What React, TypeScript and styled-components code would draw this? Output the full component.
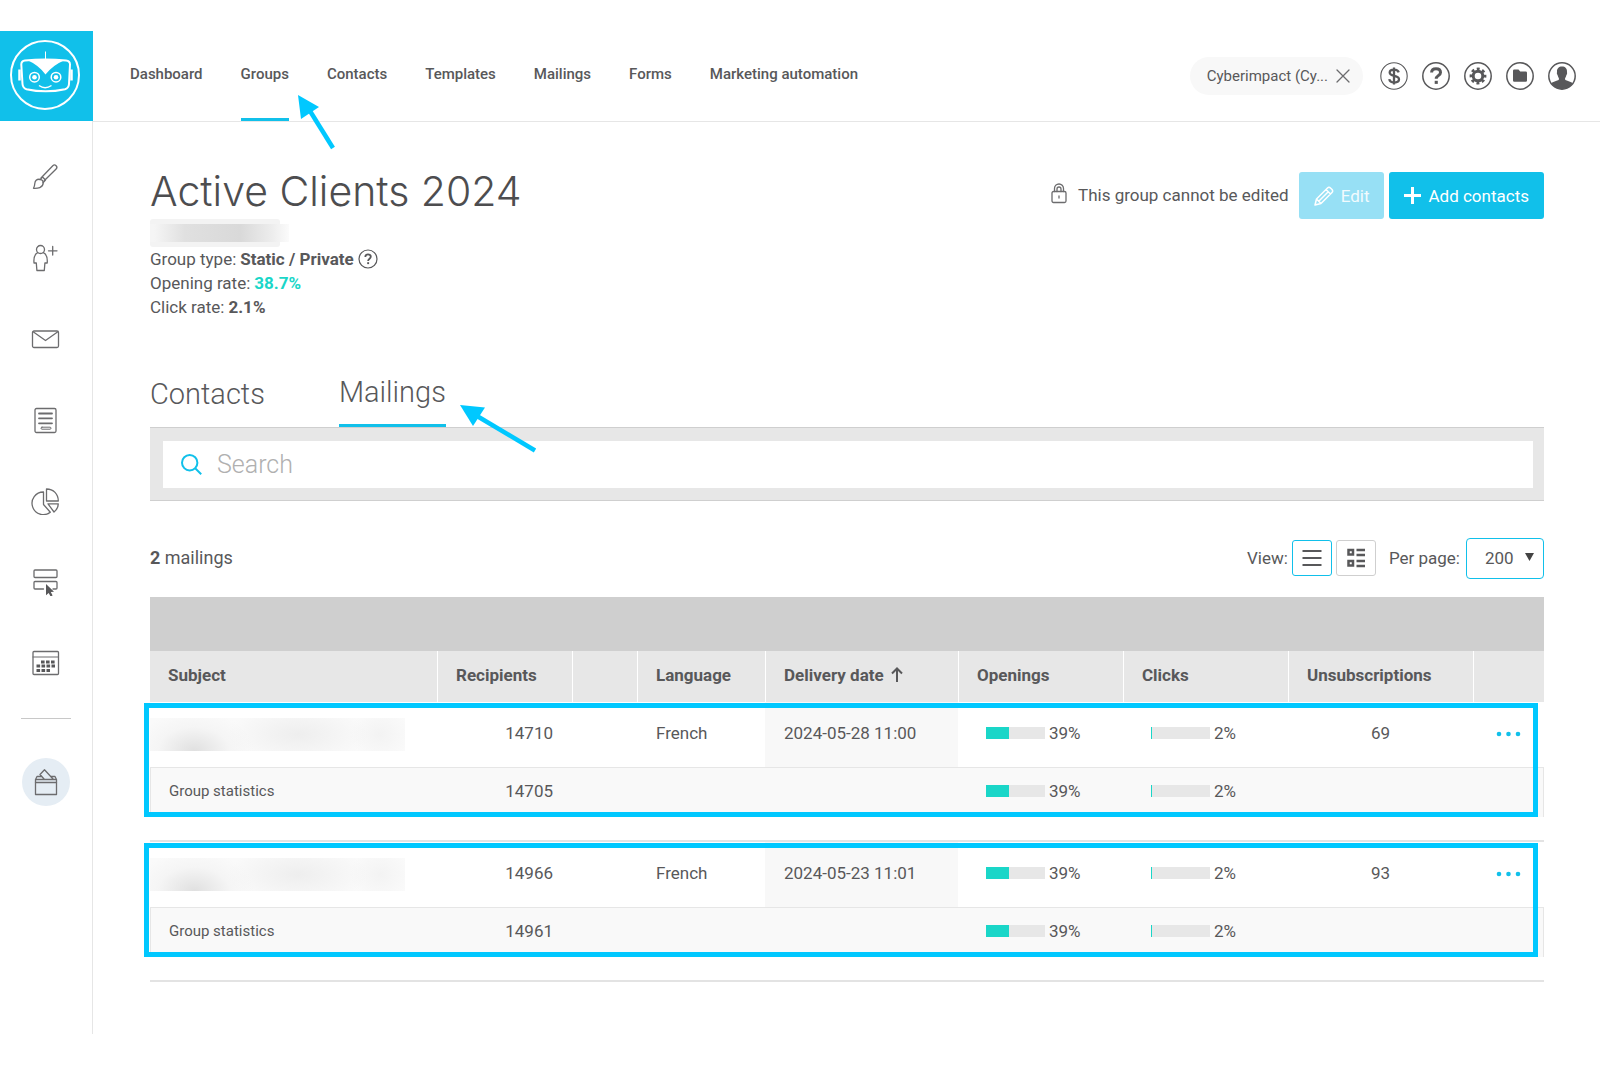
import React from "react";
import styled, { createGlobalStyle } from "styled-components";

const ink = "#58585a";
const brand = "#11c0ea";
const teal = "#1ad6c8";
const note = "#00c8ff";
const line = "#e6e6e6";

const Global = createGlobalStyle`
  *, *::before, *::after { box-sizing: border-box; }
  body { margin: 0; background: #fff; color: ${ink}; font: 400 16px/24px Roboto, "Liberation Sans", sans-serif; }
  button, input, select { font: inherit; color: inherit; }
  button { cursor: pointer; }
`;

const Page = styled.div`
  display: flex;
  min-height: 100vh;
  padding: 31px 0 32px;
`;

const Sidebar = styled.aside`
  flex: none;
  width: 93px;
  border-right: 1px solid ${line};
`;

const LogoLink = styled.a`
  display: block;
  width: 93px;
  height: 90px;
  background: ${brand};
`;

const SideList = styled.nav`
  display: flex;
  flex-direction: column;
  align-items: center;
  padding-top: 15px;
`;

const SideButton = styled.button`
  display: grid;
  place-items: center;
  width: 64px;
  height: 81px;
  padding: 0;
  border: 0;
  background: none;
`;

const SideRule = styled.hr`
  width: 50px;
  margin: 15px 0 39px;
  border: 0;
  border-top: 1px solid #c8c8c8;
`;

const RoundButton = styled(SideButton)`
  width: 48px;
  height: 48px;
  border-radius: 50%;
  background: #e5edf4;
`;

const Body = styled.div`
  flex: 1;
  min-width: 0;
`;

const Header = styled.header`
  display: flex;
  justify-content: space-between;
  height: 91px;
  padding: 0 24px 0 37px;
  border-bottom: 1px solid ${line};
`;

const Nav = styled.nav`
  display: flex;
  gap: 38px;
`;

const NavLink = styled.a<{ $active?: boolean }>`
  padding-top: 31px;
  border-bottom: 3px solid ${(p) => (p.$active ? brand : "transparent")};
  color: ${ink};
  font-size: 15px;
  font-weight: 500;
  text-decoration: none;
  white-space: nowrap;
`;

const Tools = styled.div`
  display: flex;
  align-items: center;
  gap: 14px;
`;

const Pill = styled.div`
  display: flex;
  align-items: center;
  gap: 8px;
  height: 38px;
  margin-right: 3px;
  padding: 0 13px 0 17px;
  border-radius: 19px;
  background: #f8f8f8;
  font-size: 15px;
  white-space: nowrap;
`;

const IconButton = styled.button`
  display: flex;
  padding: 0;
  border: 0;
  background: none;
`;

const Main = styled.main`
  padding: 45px 56px 0 57px;
`;

const TitleRow = styled.div`
  display: flex;
  justify-content: space-between;
  align-items: flex-start;
`;

const Title = styled.h1`
  margin: 0;
  font: 300 41px/48px Inter, "Open Sans", sans-serif;
  color: #4d4d4f;
`;

const Actions = styled.div`
  display: flex;
  align-items: flex-start;
  gap: 5px;
  padding-top: 5px;
`;

const Locked = styled.p`
  display: flex;
  gap: 11px;
  margin: 0 5px 0 0;
  padding-top: 11px;
  font-size: 17px;
`;

const Action = styled.button`
  display: flex;
  align-items: center;
  gap: 7px;
  height: 47px;
  padding: 0 15px;
  border: 0;
  border-radius: 3px;
  background: ${brand};
  color: #fff;
  font-size: 17px;
  &:disabled {
    background: #97e0f5;
    color: #f2fbfe;
    cursor: default;
  }
`;

const Redacted = styled.div`
  display: flex;
  width: 130px;
  height: 28px;
  padding: 5px 0;
  background: #f3f3f3;
  border-radius: 3px;
  &::before {
    content: "";
    flex: none;
    width: 139px;
    background: linear-gradient(90deg, #f5f5f5 3%, #e0e0e0 25%, #d9d9d9 65%, #ededed 88%, #fbfbfb);
  }
`;

const Facts = styled.ul`
  margin: 0;
  padding: 0;
  list-style: none;
  font-size: 17px;
`;

const Fact = styled.li<{ $accent?: boolean }>`
  display: flex;
  align-items: center;
  gap: 4px;
  height: 24px;
  strong {
    color: ${(p) => (p.$accent ? teal : ink)};
  }
`;

const Tabs = styled.div`
  display: flex;
  align-items: flex-start;
  gap: 74px;
  margin-top: 53px;
`;

const Tab = styled.button<{ $active?: boolean }>`
  height: 55px;
  padding: ${(p) => (p.$active ? "0 0 12px" : "0 0 8px")};
  border: 0;
  border-bottom: 3px solid ${(p) => (p.$active ? brand : "transparent")};
  background: none;
  font-size: 29px;
  font-weight: 300;
  line-height: 40px;
`;

const SearchPanel = styled.div`
  padding: 13px 11px 12px 13px;
  border: solid #cfcfcf;
  border-width: 1px 0;
  background: #e7e7e7;
`;

const SearchField = styled.label`
  display: flex;
  align-items: center;
  gap: 15px;
  height: 47px;
  padding-left: 18px;
  background: #fff;
`;

const SearchInput = styled.input`
  flex: 1;
  min-width: 0;
  padding: 0;
  border: 0;
  outline: 0;
  background: none;
  font-size: 25px;
  font-weight: 300;
  &::placeholder {
    color: #b0b0b0;
    opacity: 1;
  }
`;

const ListBar = styled.div`
  display: flex;
  justify-content: space-between;
  align-items: center;
  height: 42px;
  margin: 36px 0 18px;
`;

const Count = styled.span`
  font-size: 18px;
`;

const ListTools = styled.div`
  display: flex;
  align-items: center;
  gap: 4px;
  font-size: 17px;
`;

const ViewButton = styled.button<{ $active?: boolean }>`
  display: grid;
  place-items: center;
  width: 40px;
  height: 36px;
  padding: 0;
  border: 1px solid ${(p) => (p.$active ? brand : "#cfcfcf")};
  border-radius: 3px;
  background: #fff;
`;

const PerPage = styled.label`
  display: flex;
  align-items: center;
  gap: 6px;
  margin-left: 9px;
`;

const SelectWrap = styled.span`
  position: relative;
  svg {
    position: absolute;
    top: 15px;
    right: 10px;
    pointer-events: none;
  }
`;

const Select = styled.select`
  display: block;
  appearance: none;
  width: 78px;
  height: 41px;
  padding: 0 0 0 18px;
  border: 1px solid ${brand};
  border-radius: 4px;
  background: #fff;
`;

const Table = styled.table`
  width: 100%;
  table-layout: fixed;
  border-collapse: separate;
  border-spacing: 0;
  text-align: left;
`;

const Band = styled.td`
  height: 54px;
  padding: 0;
  background: #cfcfcf;
`;

const HeadCell = styled.th`
  height: 51px;
  padding: 0 0 3px 18px;
  background: #e7e7e7;
  font-size: 17px;
  font-weight: 700;
  white-space: nowrap;
  & + & {
    border-left: 1px solid #fff;
  }
  svg {
    margin-left: 3px;
    vertical-align: -1px;
  }
`;

const Group = styled.tbody`
  position: relative;
  &::after {
    content: "";
    position: absolute;
    inset: 1px 6px 25px -6px;
    border: 5px solid ${note};
    pointer-events: none;
  }
`;

const Cell = styled.td<{ $align?: "right" | "center"; $shade?: boolean }>`
  height: 65px;
  padding: 0 19px 3px;
  background: ${(p) => (p.$shade ? "#f8f8f8" : "#fff")};
  font-size: 17px;
  text-align: ${(p) => p.$align || "left"};
  white-space: nowrap;
`;

const SubjectCell = styled(Cell)`
  padding: 0;
`;

const StatCell = styled(Cell)`
  height: 50px;
  padding-bottom: 4px;
  border-top: 1px solid ${line};
  background: #f9f9f9;
  &:first-child {
    padding-left: 18px;
    border-left: 1px solid ${line};
    font-size: 15px;
  }
  &:last-child {
    border-right: 1px solid ${line};
  }
`;

const Spacer = styled.td`
  height: 25px;
  padding: 0;
  border-bottom: 2px solid #e3e3e3;
`;

const BlurredSubject = styled.div`
  width: 255px;
  height: 33px;
  background:
    radial-gradient(ellipse 60px 40px at 44px 100%, #e0e0e0, rgba(240, 240, 240, 0.5) 60%, transparent),
    radial-gradient(ellipse 70px 30px at 148px 50%, #eeeeee, transparent),
    radial-gradient(ellipse 30px 26px at 230px 50%, #f3f3f3, transparent),
    #fafafa;
`;

const Meter = styled.div`
  display: flex;
  align-items: center;
  gap: 4px;
  padding-left: 9px;
`;

const Track = styled.span`
  display: block;
  width: 59px;
  height: 12px;
  background: #e7e7e7;
`;

const Fill = styled.span`
  display: block;
  height: 100%;
  background: ${teal};
`;

const MoreCell = styled(Cell)`
  padding: 0 0 2px;
`;

const MoreButton = styled(IconButton)`
  margin: 0 auto;
`;

const Pointer = styled.svg`
  position: absolute;
  pointer-events: none;
`;

const NavPointer = styled(Pointer)`
  top: 94px;
  left: 297px;
`;

const TabPointer = styled(Pointer)`
  top: 404px;
  left: 459px;
`;

function Logo() {
  return (
    <svg width="93" height="90" viewBox="0 0 93 90" fill="none" stroke="#fff">
      <circle cx="45" cy="44" r="34" strokeWidth="2" />
      <path d="M45.5 20.500v9" strokeWidth="1" />
      <path d="M25 29.500Q45 27.500 66 29.500 70 30 70 33.500L69 53Q68.800 57 65 58.200 45.500 62.500 26.500 58.200 22.800 57 22.500 53L21.300 33.500Q21.300 30 25 29.500Z" strokeWidth="2" />
      <path d="M28 29.500Q45.500 28 64 29.500 53 34 45.500 43.500 38.500 34 28 29.500Z" fill="#fff" stroke="none" />
      <path d="M19.500 38.500v11M71.500 38.500v11" strokeWidth="2.500" />
      <circle cx="34.500" cy="46.200" r="4.800" strokeWidth="1.500" />
      <circle cx="56" cy="46.200" r="4.800" strokeWidth="1.500" />
      <circle cx="34.500" cy="46.200" r="2.300" fill="#fff" stroke="none" />
      <circle cx="56" cy="46.200" r="2.300" fill="#fff" stroke="none" />
      <path d="M39 54.500q6 4.500 12.500 0" strokeWidth="1.500" />
    </svg>
  );
}

function Drawing({ w = 28, h = 28, width = 1.3, children }: { w?: number; h?: number; width?: number; children: React.ReactNode }) {
  return (
    <svg width={w} height={h} viewBox={`0 0 ${w} ${h}`} fill="none" stroke="#6c6c6e" strokeWidth={width} strokeLinejoin="round" strokeLinecap="round" aria-hidden="true">
      {children}
    </svg>
  );
}

const sideItems: [string, React.ReactNode][] = [
  ["Design", (
    <>
      <path d="M10 15 21.800 2.700a2.300 2.300 0 0 1 3.300 3.300L13.200 17.800M9 16.700l2.500-2.700 3 3-2.500 2.700" />
      <path d="M9 16.300C5.500 15.800 4 18 3.800 20.500c-.1 2-.6 3.500-1.300 4.800 4 .2 9.500-.3 9.700-5.300 0-1.800-1.200-3.500-3.200-3.700Z" />
    </>
  )],
  ["Add a contact", (
    <>
      <circle cx="9.500" cy="5.500" r="4" />
      <path d="M6.700 8.700C3.500 10.300 2.500 13.500 3 19h2.300l.6 7.500h7.400l.6-7.500h2.300c.5-5.500-.5-8.700-3.900-10.300M17.500 6.800h8.500M21.700 2.500v8.500" />
    </>
  )],
  ["New mailing", <><rect x="1.500" y="6" width="26" height="16.500" rx="1.500" /><path d="m2.500 7 12 8.500 12-8.500" /></>],
  ["Forms", (
    <>
      <rect x="4" y="2.500" width="21" height="24" rx="1.500" />
      <path d="M8 7.500h13M8 12.300h13M8 17.300h13" strokeWidth="1.800" />
      <rect x="10" y="21.200" width="10" height="2" rx="1" strokeWidth="1" />
    </>
  )],
  ["Reports", (
    <>
      <path d="M12.500 5a11.300 11.300 0 1 0 6.800 20.200L12.500 17.500Z" />
      <path d="M15.500 2v12h11.800c0-7-4.800-12-11.800-12ZM17 16.800h10.300c0 3.500-1.500 6-4.300 8.200Z" />
    </>
  )],
  ["Landing pages", (
    <>
      <rect x="3" y="2" width="23" height="7.500" rx="1" />
      <path d="M12.500 21H4a1 1 0 0 1-1-1V14.500a1 1 0 0 1 1-1h21a1 1 0 0 1 1 1v5.500a1 1 0 0 1-1 1h-3" />
      <path d="M15 16v11.200l2.700-2.300 1.900 3.600 2-1-1.800-3.500 3.200-.3Z" fill="#58585a" stroke="none" />
    </>
  )],
  ["Calendar", (
    <>
      <rect x="2" y="2.500" width="25.500" height="23" rx="1" />
      <path d="M2 8h25.500" strokeWidth="1" />
      <path d="M10 13h14M5.500 17h18.500M5.500 21.500h13.500" stroke="#58585a" strokeWidth="3" strokeDasharray="3.600 1.400" strokeLinecap="butt" />
    </>
  )],
];

const Ballot = () => (
  <Drawing>
    <rect x="3.500" y="14.500" width="21" height="12" />
    <path d="M3.500 14.500v-3l1.500-3h4M18.500 8.500h4.500l1.500 3v3M3.500 11.500h21M12.500 11.500 8 6.500 12.500 1.800l9 9.700" />
  </Drawing>
);

function CircleIcon({ thin, children }: { thin?: boolean; children: React.ReactNode }) {
  return (
    <svg width="28" height="28" viewBox="0 0 28 28" fill="none" aria-hidden="true">
      <circle cx="14" cy="14" r="13.200" stroke={ink} strokeWidth={thin ? 1.1 : 1.5} />
      {children}
    </svg>
  );
}

const tools: [string, boolean, React.ReactNode][] = [
  ["Billing", true, <path d="M18.700 10.400c-.5-1.800-2.200-2.800-4.600-2.800-2.600 0-4.400 1.200-4.400 3 0 4.600 9.300 2 9.300 6.700 0 1.900-1.900 3.200-4.700 3.200-2.900 0-4.700-1.300-5-3.400M14 5.500v17" stroke={ink} strokeWidth="2.300" />],
  ["Help", false, <><path d="M9.600 10.500c.1-2.500 1.900-3.800 4.400-3.800s4.500 1.300 4.500 3.700c0 3.300-4.300 3.200-4.300 6.400" stroke={ink} strokeWidth="3" /><path d="M12.700 18.800h3.100v3.100h-3.100z" fill={ink} /></>],
  ["Settings", false, <><circle cx="14" cy="14" r="4.800" stroke={ink} strokeWidth="3" /><circle cx="14" cy="14" r="7" stroke={ink} strokeWidth="2.800" strokeDasharray="2.900 2.598" strokeDashoffset="1.450" /></>],
  ["Files", false, <path d="M7 8.800q0-1.300 1.300-1.300h4.200l1.700 2h5.500q1.300 0 1.300 1.300v7.700q0 1.300-1.300 1.300H8.300Q7 19.800 7 18.500Z" fill={ink} />],
  ["Account", false, <path d="M14 4.500c3.200 0 5.200 2 5 5.200 0 1 .3 1.400 0 2.300-.3.800-.6.900-.8 1.800-.3 1.400-1.200 2-1.200 3.200 0 2 5.500 1.800 7.800 4.500A13.200 13.200 0 0 1 14 27.200 13.200 13.200 0 0 1 3.200 21.500C5.500 18.800 11 19 11 17c0-1.200-.9-1.800-1.200-3.200-.2-.9-.5-1-.8-1.800-.3-.9 0-1.300 0-2.300-.2-3.200 1.800-5.200 5-5.200Z" fill={ink} />],
];

const navItems = ["Dashboard", "Groups", "Contacts", "Templates", "Mailings", "Forms", "Marketing automation"];

const mailings = [
  { recipients: 14710, group: 14705, language: "French", date: "2024-05-28 11:00", openings: 39, clicks: 2, unsubscriptions: 69 },
  { recipients: 14966, group: 14961, language: "French", date: "2024-05-23 11:01", openings: 39, clicks: 2, unsubscriptions: 93 },
];

function Rate({ value }: { value: number }) {
  return (
    <Meter>
      <Track><Fill style={{ width: `${value}%` }} /></Track>
      {value}%
    </Meter>
  );
}

export default function App() {
  return (
    <>
      <Global />
      <Page>
        <Sidebar>
          <LogoLink href="#" aria-label="Home"><Logo /></LogoLink>
          <SideList aria-label="Shortcuts">
            {sideItems.map(([label, drawing]) => (
              <SideButton key={label} aria-label={label}><Drawing w={31}>{drawing}</Drawing></SideButton>
            ))}
            <SideRule />
            <RoundButton aria-label="Suggestions"><Ballot /></RoundButton>
          </SideList>
        </Sidebar>
        <Body>
          <Header>
            <Nav>
              {navItems.map((item) => (
                <NavLink key={item} href="#" $active={item === "Groups"}>{item}</NavLink>
              ))}
            </Nav>
            <Tools>
              <Pill>
                Cyberimpact (Cy...
                <IconButton aria-label="Leave account">
                  <Drawing w={14} h={14}><path d="m1 1 12 12M13 1 1 13" /></Drawing>
                </IconButton>
              </Pill>
              {tools.map(([label, thin, drawing]) => (
                <IconButton key={label} aria-label={label}><CircleIcon thin={thin}>{drawing}</CircleIcon></IconButton>
              ))}
            </Tools>
          </Header>
          <Main>
            <TitleRow>
              <Title>Active Clients 2024</Title>
              <Actions>
                <Locked>
                  <Drawing w={16} h={21}>
                    <rect x="1" y="8.500" width="14" height="11" rx="1.500" />
                    <path d="M3.500 8.500V5.500a4.500 4.500 0 0 1 9 0v3M6 8.500V6a2 2 0 0 1 4 0v2.500M8 13v2" />
                  </Drawing>
                  This group cannot be edited
                </Locked>
                <Action disabled>
                  <svg width="20" height="20" viewBox="0 0 20 20" fill="none" stroke="#fff" strokeWidth="1.500" strokeLinejoin="round">
                    <path d="M1 19 2.500 13 13.500 2q1.500-1.500 3.200.2l1.100 1.100Q19.500 5 18 6.500L7 17.500ZM12 3.500l4.500 4.500M2.500 13l4.500 4.500M5 15 14 6" />
                  </svg>
                  Edit
                </Action>
                <Action>
                  <svg width="17" height="17" viewBox="0 0 17 17" stroke="#fff" strokeWidth="3"><path d="M8.500 0v17M0 8.500h17" /></svg>
                  Add contacts
                </Action>
              </Actions>
            </TitleRow>
            <Redacted />
            <Facts>
              <Fact>
                Group type: <strong>Static / Private</strong>
                <IconButton aria-label="About group types">
                  <svg width="20" height="20" viewBox="0 0 20 20" fill="none" stroke={ink}>
                    <circle cx="10" cy="10" r="9" strokeWidth="1.200" />
                    <path d="M7.300 8C7.300 6.300 8.400 5.300 10 5.300s2.800.9 2.800 2.400c0 2-2.700 2-2.700 4.300" strokeWidth="1.800" />
                    <path d="M9.200 13.200h1.900v1.900H9.200z" fill={ink} stroke="none" />
                  </svg>
                </IconButton>
              </Fact>
              <Fact $accent>Opening rate: <strong>38.7%</strong></Fact>
              <Fact>Click rate: <strong>2.1%</strong></Fact>
            </Facts>
            <Tabs role="tablist">
              <Tab role="tab" aria-selected={false}>Contacts</Tab>
              <Tab role="tab" aria-selected $active>Mailings</Tab>
            </Tabs>
            <SearchPanel>
              <SearchField>
                <svg width="21" height="21" viewBox="0 0 21 21" fill="none" stroke={brand} strokeWidth="2" aria-hidden="true">
                  <circle cx="8.700" cy="8.700" r="7.700" />
                  <path d="m14.200 14.200 6 6" />
                </svg>
                <SearchInput type="search" placeholder="Search" aria-label="Search" />
              </SearchField>
            </SearchPanel>
            <ListBar>
              <Count><strong>2</strong> mailings</Count>
              <ListTools>
                View:
                <ViewButton $active aria-label="List view">
                  <svg width="20" height="18" viewBox="0 0 20 18" stroke={ink} strokeWidth="2"><path d="M.5 2h19M.5 9h19M.5 16h19" /></svg>
                </ViewButton>
                <ViewButton aria-label="Detailed view">
                  <svg width="18" height="20" viewBox="0 0 18 20" fill="none" stroke={ink} strokeWidth="2.500">
                    <path d="M1.500 2h4.500v4.500H1.500zM1.500 13h4.500v4.500H1.500zM9.500 2h8.500M9.500 7h8.500M9.500 13h8.500M9.500 18h8.500" />
                  </svg>
                </ViewButton>
                <PerPage>
                  Per page:
                  <SelectWrap>
                    <Select defaultValue="200">
                      <option>200</option>
                      <option>100</option>
                      <option>50</option>
                    </Select>
                    <svg width="9" height="8" viewBox="0 0 9 8" fill="#444"><path d="M0 0h9L4.500 8Z" /></svg>
                  </SelectWrap>
                </PerPage>
              </ListTools>
            </ListBar>
            <Table>
              <colgroup>
                <col />
                <col width="135" />
                <col width="65" />
                <col width="128" />
                <col width="193" />
                <col width="165" />
                <col width="165" />
                <col width="185" />
                <col width="71" />
              </colgroup>
              <thead>
                <tr><Band colSpan={9} /></tr>
                <tr>
                  <HeadCell>Subject</HeadCell>
                  <HeadCell>Recipients</HeadCell>
                  <HeadCell />
                  <HeadCell>Language</HeadCell>
                  <HeadCell>
                    Delivery date{" "}
                    <svg width="12" height="15" viewBox="0 0 12 15" fill="none" stroke={ink} strokeWidth="2"><path d="M6 15V2M1 6.500l5-5 5 5" /></svg>
                  </HeadCell>
                  <HeadCell>Openings</HeadCell>
                  <HeadCell>Clicks</HeadCell>
                  <HeadCell>Unsubscriptions</HeadCell>
                  <HeadCell />
                </tr>
              </thead>
              {mailings.map((m) => (
                <Group key={m.date}>
                  <tr>
                    <SubjectCell><BlurredSubject /></SubjectCell>
                    <Cell $align="right">{m.recipients}</Cell>
                    <Cell />
                    <Cell>{m.language}</Cell>
                    <Cell $shade>{m.date}</Cell>
                    <Cell><Rate value={m.openings} /></Cell>
                    <Cell><Rate value={m.clicks} /></Cell>
                    <Cell $align="center">{m.unsubscriptions}</Cell>
                    <MoreCell>
                      <MoreButton aria-label="More actions">
                        <svg width="25" height="6" viewBox="0 0 25 6" fill={brand}>
                          <circle cx="3" cy="3" r="2.300" /><circle cx="12.500" cy="3" r="2.300" /><circle cx="22" cy="3" r="2.300" />
                        </svg>
                      </MoreButton>
                    </MoreCell>
                  </tr>
                  <tr>
                    <StatCell>Group statistics</StatCell>
                    <StatCell $align="right">{m.group}</StatCell>
                    <StatCell />
                    <StatCell />
                    <StatCell />
                    <StatCell><Rate value={m.openings} /></StatCell>
                    <StatCell><Rate value={m.clicks} /></StatCell>
                    <StatCell />
                    <StatCell />
                  </tr>
                  <tr><Spacer colSpan={9} /></tr>
                </Group>
              ))}
            </Table>
          </Main>
        </Body>
      </Page>
      <NavPointer width="40" height="56" viewBox="0 0 40 56" fill={note}>
        <path d="M1 1 22 13 4 25Z" />
        <path d="M13 17 36 54" stroke={note} strokeWidth="4.500" />
      </NavPointer>
      <TabPointer width="80" height="50" viewBox="0 0 80 50" fill={note}>
        <path d="M1 1 26 3.500 14 22Z" />
        <path d="M18 12 76 46.500" stroke={note} strokeWidth="4.500" />
      </TabPointer>
    </>
  );
}
